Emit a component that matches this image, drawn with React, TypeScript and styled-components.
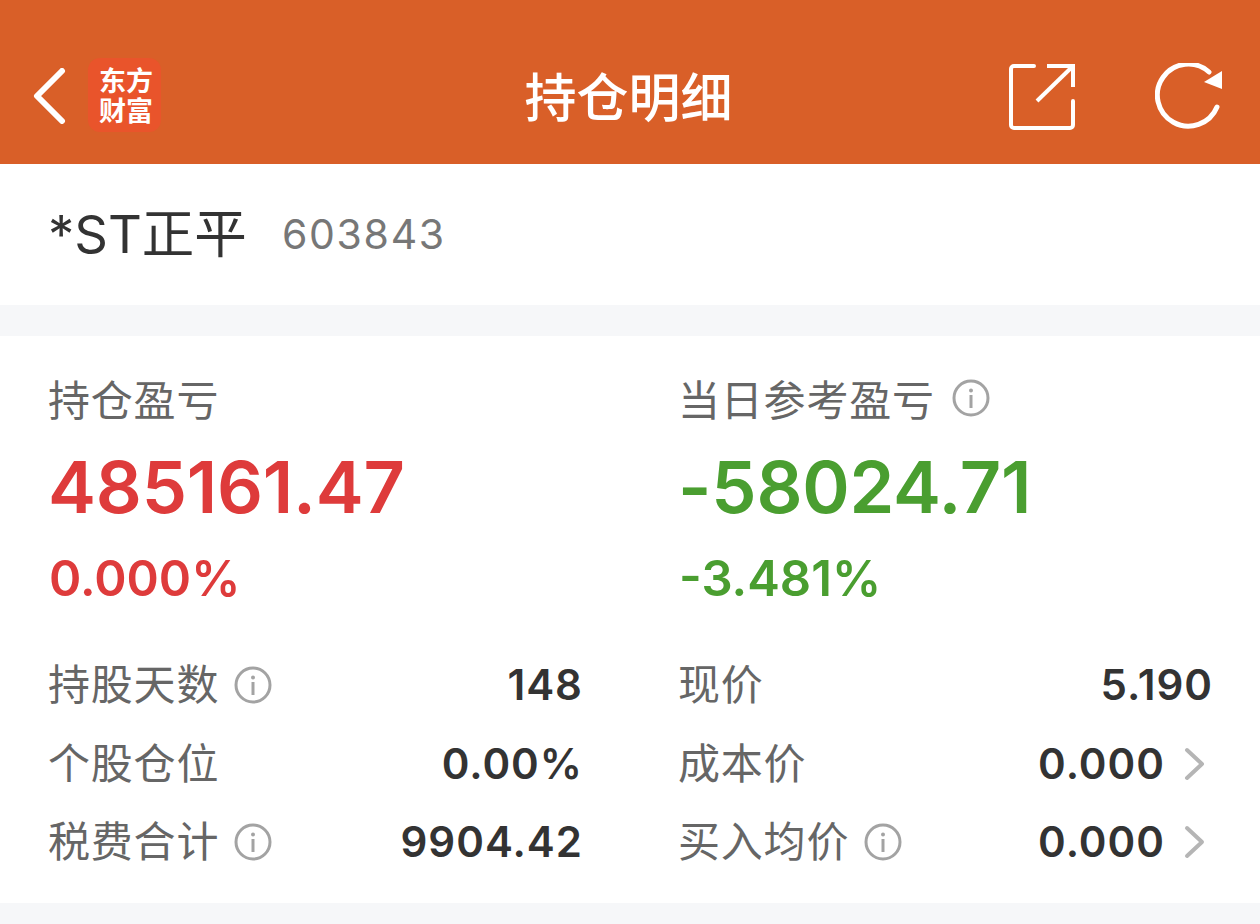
import React from "react";
import styled, { createGlobalStyle } from "styled-components";

const Global = createGlobalStyle`
  html, body { margin: 0; padding: 0; background: #f6f7f9; }
  body { width: 1260px; height: 924px; overflow: hidden; font-family: "Inter", "Noto Sans CJK SC", sans-serif; }
`;
const CJK = `"Noto Sans CJK SC", sans-serif`;
const NUM = `"Inter", "Noto Sans CJK SC", sans-serif`;

const Page = styled.div`
  width: 1260px; height: 924px; display: flex; flex-direction: column; background: #f6f7f9;
`;
const Header = styled.header`
  height: 164px; flex: none; background: #d95f28; box-sizing: border-box; padding: 32px 37px 0 32px;
  display: grid; grid-template-columns: 1fr auto 1fr; align-items: center;
`;
const HeaderLeft = styled.div`
  display: flex; align-items: center;
`;
const Back = styled.svg`
  width: 36px; height: 56px; flex: none; margin-top: -4px;
`;
const Logo = styled.div`
  width: 73px; height: 74px; margin-left: 20px; margin-top: -6px; border-radius: 12px; background: #e9542b; color: #fff;
  display: flex; flex-direction: column; align-items: center; justify-content: center; box-sizing: border-box; padding-left: 3px;
  font: 700 27px/30px ${CJK}; flex: none;
`;
const Title = styled.h1`
  margin: -7px 0 0 2px; color: #fff; text-align: center;
  font: 500 52px/66px ${CJK};
`;
const HeaderIcons = styled.div`
  justify-self: end; display: flex; gap: 79px; align-items: center; margin-top: -2px;
`;
const NameRow = styled.section`
  height: 141px; flex: none; background: #fff; display: flex; align-items: center; padding-left: 48px; gap: 35px;
`;
const Name = styled.div`
  font: 400 52.5px/60px ${NUM}; color: #333; margin-top: -1px;
`;
const Code = styled.div`
  font: 400 41px/60px "Inter", sans-serif; color: #777; letter-spacing: 1.7px; margin-top: -2px;
`;
const Panel = styled.section`
  margin-top: 31px; height: 567px; flex: none; background: #fff; padding: 33px 47px 0 48px; display: grid;
  grid-template-columns: 535px 535px; column-gap: 95px; box-sizing: border-box;
`;
const Col = styled.div`
  display: flex; flex-direction: column;
`;
const CapRow = styled.div`
  display: flex; align-items: center; gap: 2px; height: 58px;
`;
const Cap = styled.span`
  font: 400 42px/58px ${CJK}; color: #666; letter-spacing: 0.8px;
`;
const Big = styled.div<{ $c: string }>`
  font: 600 72px/86px "Inter", sans-serif; color: ${p => p.$c}; margin: 17px 0 0; letter-spacing: -0.2px;
`;
const Pct = styled.div<{ $c: string }>`
  font: 600 49px/60px "Inter", sans-serif; color: ${p => p.$c}; margin: 19px 0 37px 1px;
`;
const Row = styled.div`
  height: 78.5px; display: flex; align-items: center;
`;
const Label = styled.span`
  font: 400 42px/58px ${CJK}; color: #666; letter-spacing: 0.8px; padding-bottom: 6px;
`;
const Value = styled.span`
  margin-left: auto; font: 600 42px/58px "Inter", sans-serif; color: #333; letter-spacing: 1px;
`;
const Chevron = styled.svg`
  width: 22px; height: 34px; margin-left: 19px; margin-right: 7px; flex: none;
`;
const InfoSvg = styled.svg`
  width: 38px; height: 38px; margin-left: 15px; flex: none;
`;

const Info = () => (
  <InfoSvg viewBox="0 0 38 38" fill="none">
    <circle cx="19" cy="19" r="17" stroke="#a3a3a3" strokeWidth="3" />
    <circle cx="19" cy="11.5" r="2" fill="#a3a3a3" />
    <path d="M19 16v13" stroke="#a3a3a3" strokeWidth="3" />
  </InfoSvg>
);
const Chev = () => (
  <Chevron viewBox="0 0 22 34" fill="none">
    <path d="M3 3l15 14L3 31" stroke="#b5b5b5" strokeWidth="4" strokeLinecap="round" strokeLinejoin="round" />
  </Chevron>
);

const RED = "#de3b3b";
const GREEN = "#4a9e30";

export default function App() {
  return (
    <Page>
      <Global />
      <Header>
        <HeaderLeft>
          <Back viewBox="0 0 36 56" fill="none">
            <path d="M30 3L5 28l25 25" stroke="#fff" strokeWidth="6" strokeLinecap="round" strokeLinejoin="round" />
          </Back>
          <Logo><span>东方</span><span>财富</span></Logo>
        </HeaderLeft>
        <Title>持仓明细</Title>
        <HeaderIcons>
          <svg width="68" height="68" viewBox="0 0 68 68" fill="none" stroke="#fff" strokeWidth="4">
            <path d="M26 3H6a3 3 0 0 0-3 3v56a3 3 0 0 0 3 3h56a3 3 0 0 0 3-3V38" strokeLinecap="round" />
            <path d="M29 38L64 4" />
            <path d="M39 3h26v21" />
          </svg>
          <svg width="68" height="68" viewBox="0 0 68 68" fill="none">
            <path d="M62 44A31 31 0 1 1 54 9" stroke="#fff" strokeWidth="5" strokeLinecap="round" />
            <path d="M67 8v18L49 19z" fill="#fff" />
          </svg>
        </HeaderIcons>
      </Header>
      <NameRow>
        <Name>*ST正平</Name>
        <Code>603843</Code>
      </NameRow>
      <Panel>
        <Col>
          <CapRow><Cap>持仓盈亏</Cap></CapRow>
          <Big $c={RED}>485161.47</Big>
          <Pct $c={RED}>0.000%</Pct>
          <Row><Label>持股天数</Label><Info /><Value>148</Value></Row>
          <Row><Label>个股仓位</Label><Value>0.00%</Value></Row>
          <Row><Label>税费合计</Label><Info /><Value>9904.42</Value></Row>
        </Col>
        <Col>
          <CapRow><Cap>当日参考盈亏</Cap><Info /></CapRow>
          <Big $c={GREEN}>-58024.71</Big>
          <Pct $c={GREEN}>-3.481%</Pct>
          <Row><Label>现价</Label><Value>5.190</Value></Row>
          <Row><Label>成本价</Label><Value>0.000</Value><Chev /></Row>
          <Row><Label>买入均价</Label><Info /><Value>0.000</Value><Chev /></Row>
        </Col>
      </Panel>
    </Page>
  );
}
